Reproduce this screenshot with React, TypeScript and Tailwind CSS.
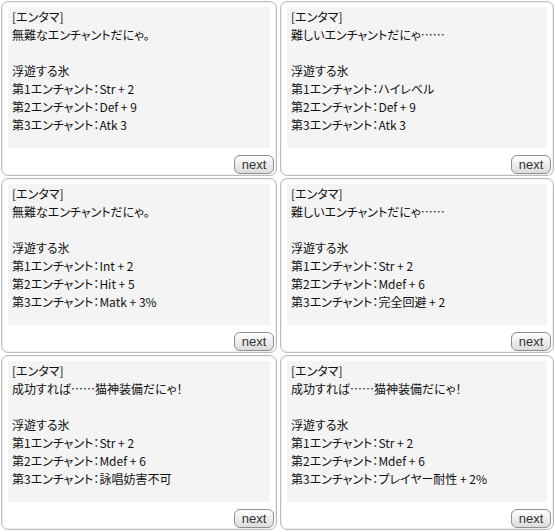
import React from "react";

type Dlg = { title: string; line: string; e1: string; e2: string; e3: string };

const dialogs: Dlg[] = [
  { title: "[エンタマ]", line: "無難なエンチャントだにゃ。", e1: "Str + 2", e2: "Def + 9", e3: "Atk 3" },
  { title: "[エンタマ]", line: "難しいエンチャントだにゃ……", e1: "ハイレベル", e2: "Def + 9", e3: "Atk 3" },
  { title: "[エンタマ]", line: "無難なエンチャントだにゃ。", e1: "Int + 2", e2: "Hit + 5", e3: "Matk + 3%" },
  { title: "[エンタマ]", line: "難しいエンチャントだにゃ……", e1: "Str + 2", e2: "Mdef + 6", e3: "完全回避 + 2" },
  { title: "[エンタマ]", line: "成功すれば……猫神装備だにゃ！", e1: "Str + 2", e2: "Mdef + 6", e3: "詠唱妨害不可" },
  { title: "[エンタマ]", line: "成功すれば……猫神装備だにゃ！", e1: "Str + 2", e2: "Mdef + 6", e3: "プレイヤー耐性 + 2%" },
];

function Dialog({ d }: { d: Dlg }) {
  return (
    <div className="flex h-[175px] flex-col rounded-[7px] border border-[#bcbcbc] bg-white px-[6px] pt-[5px] shadow-[inset_0_0_0_1px_#f0f0f0]">
      <div className="h-[141px] bg-[#f4f4f4] pl-[4px] pt-[1px] text-[12px] leading-[18px] text-[#111] [font-family:'Noto_Sans_CJK_JP',sans-serif] [font-feature-settings:'palt']">
        <div>{d.title}</div>
        <div>{d.line}</div>
        <div>&nbsp;</div>
        <div>浮遊する氷</div>
        <div>第1エンチャント：{d.e1}</div>
        <div>第2エンチャント：{d.e2}</div>
        <div>第3エンチャント：{d.e3}</div>
      </div>
      <div className="mt-[7px] flex justify-end">
        <div className="-mr-[4px] flex h-[19px] w-[40px] items-center justify-center rounded-[6px] border border-[#8f8f8f] bg-gradient-to-b from-white to-[#dcdcdc] pb-[1px] text-[13px] leading-none text-[#333] [font-family:'Liberation_Sans',Arial,sans-serif]">
          next
        </div>
      </div>
    </div>
  );
}

export default function App() {
  return (
    <div className="h-[532px] w-[555px] bg-white p-[1px]">
      <div className="grid grid-cols-[276px_274px] grid-rows-[175px_175px_175px] gap-[2px] gap-x-[3px]">
        {dialogs.map((d, i) => (
          <Dialog key={i} d={d} />
        ))}
      </div>
    </div>
  );
}
